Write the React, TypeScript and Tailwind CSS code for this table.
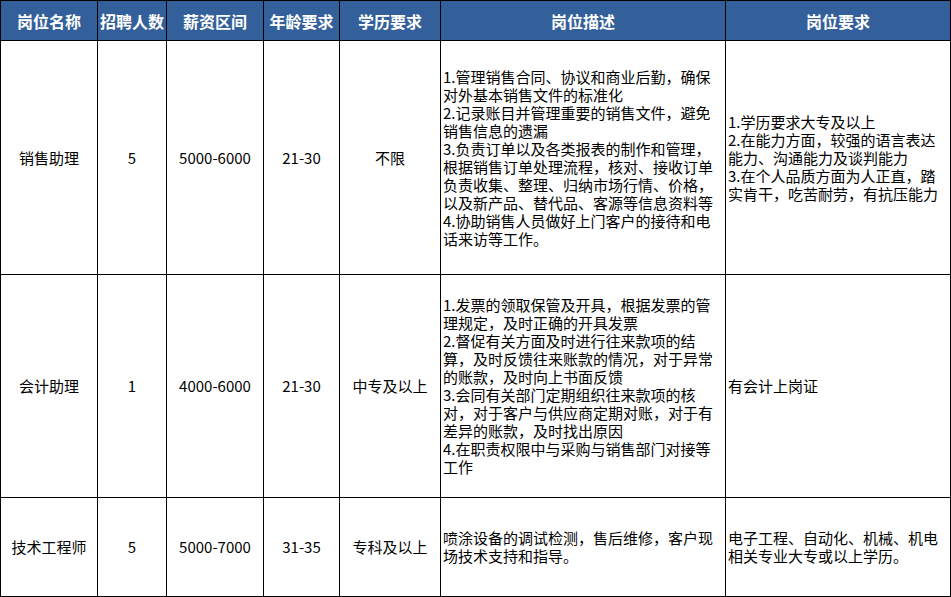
const font = { fontFamily: '"Noto Sans CJK SC", "Noto Sans", sans-serif' };

type Job = {
  name: string;
  count: string;
  salary: string;
  age: string;
  edu: string;
  desc: string[];
  req: string[];
  height: string;
};

const jobs: Job[] = [
  {
    name: '销售助理',
    count: '5',
    salary: '5000-6000',
    age: '21-30',
    edu: '不限',
    desc: [
      '1.管理销售合同、协议和商业后勤，确保',
      '对外基本销售文件的标准化',
      '2.记录账目并管理重要的销售文件，避免',
      '销售信息的遗漏',
      '3.负责订单以及各类报表的制作和管理，',
      '根据销售订单处理流程，核对、接收订单',
      '负责收集、整理、归纳市场行情、价格，',
      '以及新产品、替代品、客源等信息资料等',
      '4.协助销售人员做好上门客户的接待和电',
      '话来访等工作。',
    ],
    req: [
      '1.学历要求大专及以上',
      '2.在能力方面，较强的语言表达',
      '能力、沟通能力及谈判能力',
      '3.在个人品质方面为人正直，踏',
      '实肯干，吃苦耐劳，有抗压能力',
    ],
    height: 'h-[234px]',
  },
  {
    name: '会计助理',
    count: '1',
    salary: '4000-6000',
    age: '21-30',
    edu: '中专及以上',
    desc: [
      '1.发票的领取保管及开具，根据发票的管',
      '理规定，及时正确的开具发票',
      '2.督促有关方面及时进行往来款项的结',
      '算，及时反馈往来账款的情况，对于异常',
      '的账款，及时向上书面反馈',
      '3.会同有关部门定期组织往来款项的核',
      '对，对于客户与供应商定期对账，对于有',
      '差异的账款，及时找出原因',
      '4.在职责权限中与采购与销售部门对接等',
      '工作',
    ],
    req: ['有会计上岗证'],
    height: 'h-[223px]',
  },
  {
    name: '技术工程师',
    count: '5',
    salary: '5000-7000',
    age: '31-35',
    edu: '专科及以上',
    desc: ['喷涂设备的调试检测，售后维修，客户现', '场技术支持和指导。'],
    req: ['电子工程、自动化、机械、机电', '相关专业大专或以上学历。'],
    height: 'h-[99px]',
  },
];

const headers = ['岗位名称', '招聘人数', '薪资区间', '年龄要求', '学历要求', '岗位描述', '岗位要求'];

export default function App() {
  return (
    <div className="w-[951px] h-[597px] bg-white overflow-hidden" style={font}>
      <table className="table-fixed border-collapse w-[950px] text-[15px] leading-[18px] text-black">
        <colgroup>
          <col className="w-[97px]" />
          <col className="w-[69px]" />
          <col className="w-[97px]" />
          <col className="w-[76px]" />
          <col className="w-[101px]" />
          <col className="w-[285px]" />
          <col className="w-[225px]" />
        </colgroup>
        <thead>
          <tr className="h-[40px] bg-[#33609a]">
            {headers.map((h) => (
              <th
                key={h}
                className="border border-black text-white font-bold text-[16px] text-center whitespace-nowrap p-0"
              >
                {h}
              </th>
            ))}
          </tr>
        </thead>
        <tbody>
          {jobs.map((j) => (
            <tr key={j.name} className={j.height}>
              <td className="border border-black text-center p-0">{j.name}</td>
              <td className="border border-black text-center p-0">{j.count}</td>
              <td className="border border-black text-center p-0">{j.salary}</td>
              <td className="border border-black text-center p-0">{j.age}</td>
              <td className="border border-black text-center p-0">{j.edu}</td>
              <td className="border border-black px-[2px] py-0 align-middle">
                {j.desc.map((l, i) => (
                  <div key={i} className="whitespace-nowrap">
                    {l}
                  </div>
                ))}
              </td>
              <td className="border border-black px-[2px] py-0 align-middle">
                {j.req.map((l, i) => (
                  <div key={i} className="whitespace-nowrap">
                    {l}
                  </div>
                ))}
              </td>
            </tr>
          ))}
        </tbody>
      </table>
    </div>
  );
}
